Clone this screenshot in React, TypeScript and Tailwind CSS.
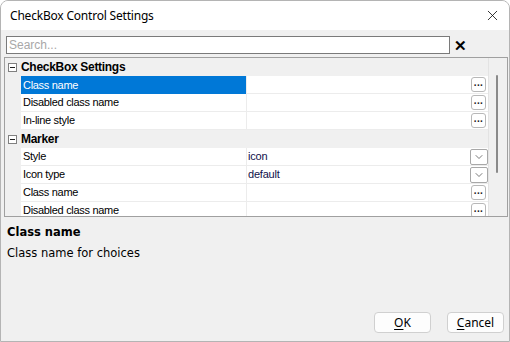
import { ChevronDown, X } from "lucide-react";

type Row =
  | { kind: "header"; label: string }
  | { kind: "prop"; label: string; value?: string; editor: "dots" | "drop"; selected?: boolean };

const rows: Row[] = [
  { kind: "header", label: "CheckBox Settings" },
  { kind: "prop", label: "Class name", editor: "dots", selected: true },
  { kind: "prop", label: "Disabled class name", editor: "dots" },
  { kind: "prop", label: "In-line style", editor: "dots" },
  { kind: "header", label: "Marker" },
  { kind: "prop", label: "Style", value: "icon", editor: "drop" },
  { kind: "prop", label: "Icon type", value: "default", editor: "drop" },
  { kind: "prop", label: "Class name", editor: "dots" },
  { kind: "prop", label: "Disabled class name", editor: "dots" },
];

export default function App() {
  return (
    <div className="flex h-[342px] w-[510px] flex-col overflow-hidden rounded-t-lg border border-[#b4b4b4] bg-[#f0f0f0] font-['Liberation_Sans',sans-serif] text-black">
      {/* Title bar */}
      <div className="flex h-[29px] shrink-0 items-center justify-between bg-white pl-[9px] pr-[8px]">
        <span className="font-['Noto_Sans',sans-serif] text-[12px] tracking-[-0.2px]">
          CheckBox Control Settings
        </span>
        <X size={17} strokeWidth={1.1} />
      </div>

      {/* Search */}
      <div className="mt-[6px] flex items-center pl-[5px]">
        <div className="flex h-[18px] w-[444px] items-center border border-[#7a7a7a] bg-white pl-[2px] text-[12px] text-[#a8a8a8]">
          Search...
        </div>
        <span className="ml-[4px] text-[15px] font-bold leading-none">✕</span>
      </div>

      {/* Property grid */}
      <div className="ml-[3px] mr-[1px] mt-[3px] flex h-[160px] shrink-0 overflow-hidden border border-[#a0a0a0] bg-white">
        <div className="flex w-[483px] flex-col">
          {rows.map((row, i) =>
            row.kind === "header" ? (
              <HeaderRow key={i} label={row.label} />
            ) : (
              <PropRow key={i} row={row} />
            ),
          )}
        </div>
        <div className="relative flex-1 border-l border-[#e3e3e3] bg-[#f0f0f0]">
          <div className="absolute left-[7px] top-[17px] h-[98px] w-[2px] rounded-full bg-[#8a8a8a]" />
        </div>
      </div>

      {/* Description */}
      <div className="px-[6px] pt-[8px] font-['DejaVu_Sans',sans-serif]">
        <div className="text-[11.5px] font-bold leading-[14px]">Class name</div>
        <div className="mt-[7px] text-[11.5px] leading-[14px]">Class name for choices</div>
      </div>

      {/* Buttons */}
      <div className="mt-auto mb-[8px] flex justify-end gap-[16px] pr-[5px]">
        <DialogButton accel="O" rest="K" />
        <DialogButton accel="C" rest="ancel" />
      </div>
    </div>
  );
}

function HeaderRow({ label }: { label: string }) {
  return (
    <div className="flex h-[18px] shrink-0 items-center bg-[#f0f0f0]">
      <div className="ml-[3px] flex h-[9px] w-[9px] items-center justify-center border border-[#808080] bg-white">
        <div className="h-px w-[5px] bg-[#202020]" />
      </div>
      <span className="ml-[4px] text-[12px] font-bold tracking-[-0.3px]">{label}</span>
    </div>
  );
}

function PropRow({
  row,
}: {
  row: { label: string; value?: string; editor: "dots" | "drop"; selected?: boolean };
}) {
  return (
    <div className="flex h-[18px] shrink-0">
      <div className="w-[16px] shrink-0 bg-[#f0f0f0]" />
      <div
        className={
          row.selected
            ? "flex w-[225px] shrink-0 items-center bg-[#0078d7] pl-[2px] text-[11px] tracking-[-0.3px] text-white"
            : "flex w-[225px] shrink-0 items-center border-b border-[#ececec] pl-[2px] text-[11px] tracking-[-0.3px]"
        }
      >
        {row.label}
      </div>
      <div className="w-px shrink-0 bg-[#ececec]" />
      <div className="flex flex-1 items-center justify-between border-b border-[#ececec] pl-[1px] text-[11px] tracking-[-0.2px] text-[#10104a]">
        <span>{row.value ?? ""}</span>
        {row.editor === "dots" ? (
          <div className="mr-[2px] flex h-[15px] w-[15px] items-end justify-center rounded-[3px] border border-[#b8b8b8] bg-white pb-[2px] text-[10px] font-bold leading-[6px] text-[#1a1a1a]">
            ···
          </div>
        ) : (
          <div className="flex h-[16px] w-[18px] items-center justify-center rounded-[2px] border border-[#a8a8a8] bg-white">
            <ChevronDown size={12} strokeWidth={1.4} className="text-[#404040]" />
          </div>
        )}
      </div>
    </div>
  );
}

function DialogButton({ accel, rest }: { accel: string; rest: string }) {
  return (
    <div className="flex h-[21px] w-[57px] items-center justify-center rounded-[4px] border border-[#d0d0d0] bg-[#fdfdfd] font-['Noto_Sans',sans-serif] text-[12px]">
      <span className="underline underline-offset-2">{accel}</span>
      <span>{rest}</span>
    </div>
  );
}
